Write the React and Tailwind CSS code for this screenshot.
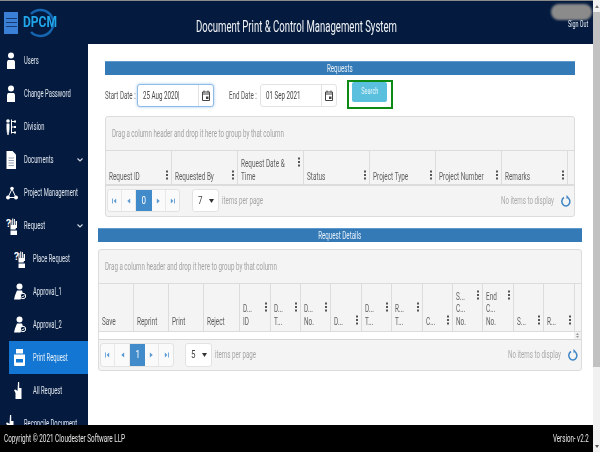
import React from "react";

const T = ({ children, className = "", s = "scale-x-[.62]", o = "origin-left" }) => (
  <span className={`inline-block whitespace-nowrap ${o} ${s} ${className}`}>{children}</span>
);

const Kebab = () => (
  <svg width="2" height="10" viewBox="0 0 2 10" className="shrink-0 mt-px fill-[#555]">
    <rect y="0.5" width="2" height="2" /><rect y="4" width="2" height="2" /><rect y="7.5" width="2" height="2" />
  </svg>
);

const Ico = ({ children, w = 14, h = 20, vb = "0 0 14 20" }) => (
  <svg width={w} height={h} viewBox={vb} className="fill-white stroke-white shrink-0" strokeWidth="0">{children}</svg>
);
const UserI = () => (
  <Ico w={8} h={18} vb="0 0 8 18"><circle cx="4" cy="3.500" r="3" /><path d="M1 8h6l1 1.500V17H0V9.500z" /></Ico>
);
const DivI = () => (
  <Ico w={10} h={18} vb="0 0 10 18"><circle cx="2" cy="3" r="1.800" /><path d="M.5 5.500h3v5l-.6 6.500H2.300L2 12l-.3 5H1.100L.5 10.500z" /><path d="M5.500 1.500v14M5.500 3.500h3M5.500 9h3M5.500 14.500h3" strokeWidth="1" fill="none" /><rect x="8" y="2.500" width="2" height="2" /><rect x="8" y="8" width="2" height="2" /><rect x="8" y="13.500" width="2" height="2" /></Ico>
);
const DocI = () => (
  <Ico w={10} h={18} vb="0 0 10 18"><path d="M.5 0H6.500L10 3.500V18H.5z" /><path d="M2.500 7h5.500M2.500 9.500h5.500M2.500 12h5.500M2.500 14.500h5.500" stroke="#9aa5b6" strokeWidth="1" fill="none" /></Ico>
);
const ProjI = () => (
  <Ico w={12} h={16} vb="0 0 12 16"><circle cx="6" cy="3.500" r="1.800" /><circle cx="2" cy="12.500" r="2" /><circle cx="10" cy="12.500" r="2" /><path d="M6 4L2 12.500h8z" fill="none" strokeWidth="1" /></Ico>
);
const ReqI = () => (
  <svg width="12" height="18" viewBox="0 0 12 18" className="shrink-0 fill-white">
    <path d="M4.500 3h1v5h.7V1.500h1V8h.7V2h1v6h.7V4h1.400v7H10l-.5 1.500h-5z" />
    <path d="M4.500 13.500h6.500V18H4.500z" />
    <text x="0" y="9.500" fontSize="10" fontWeight="700" fontFamily="Roboto, sans-serif">?</text>
  </svg>
);
const ApprI = () => (
  <Ico w={12} h={17} vb="0 0 12 17"><circle cx="5.500" cy="3.500" r="3" /><path d="M3 7.500h5l1 3-2.500 6H0l1-4z" /><circle cx="9" cy="13" r="2.700" fill="#041b3f" stroke="#fff" strokeWidth="1" /><path d="M7.700 13l1 1 1.600-1.800" fill="none" strokeWidth="1" /></Ico>
);
const PrintI = () => (
  <svg width="11" height="17" viewBox="0 0 11 17" className="shrink-0 fill-white">
    <path d="M2 0h7v4.500H2z" /><path d="M0 5.500h11V16a1 1 0 0 1-1 1H1a1 1 0 0 1-1-1z" />
    <path d="M2 10h7v3.500H2z" fill="#1376d2" />
  </svg>
);
const HandI = () => (
  <Ico w={8} h={17} vb="0 0 8 17"><path d="M4 0h1.200v6H7.500v11H1.500v-6L0 8l1.500-.5L3.500 9z" /></Ico>
);

const Item = ({ icon, label, sub, arrow, active }) => (
  <div className={`h-[33px] flex shrink-0 items-center ${sub ? "ml-[9px] pl-[5px]" : "pl-[6px]"} ${active ? "bg-[#1376d2]" : ""}`}>
    <div className={`flex shrink-0 items-center ${sub ? "w-[19px]" : "w-[18px]"}`}>{icon}</div>
    <div className="flex min-w-0 flex-1 items-center">
      <T s="scale-x-[.58]" className={`text-[10px] leading-3 ${active ? "text-[#e6f0fa]" : "text-[#dfe4ec]"}`}>{label}</T>
    </div>
    {arrow && (
      <svg width="6" height="4" viewBox="0 0 6 4" className="mr-[5px] shrink-0 fill-none stroke-[#cfd6e2]" strokeWidth="1.200"><path d="M.5.5L3 3 5.500.5" /></svg>
    )}
  </div>
);

const PIcon = ({ d }) => (
  <svg width="5" height="6" viewBox="0 0 6 6" className="fill-[#5a9ad3]"><path d={d} /></svg>
);
const icons = ["M0 0h1v6H0zM5 0v6L2 3z", "M5 0v6L1.500 3z", null, "M1 0v6l3.500-3z", "M6 0h-1v6h1zM1 0v6l3-3z"];

const Pager = ({ page, size, widths, selectW, gap, ph }) => (
  <div className="flex h-[29px] items-center">
    <div className={`flex ${ph} rounded-[3px] border border-[#e3e3e3] bg-[#fafafa] overflow-hidden`}>
      {icons.map((d, i) =>
        d ? (
          <div key={i} className="flex items-center justify-center border-r border-[#e8e8e8] last:border-r-0" style={{ width: widths[i] }}>
            <PIcon d={d} />
          </div>
        ) : (
          <div key={i} className="flex items-center justify-center bg-[#428bca] text-white" style={{ width: widths[i] }}>
            <T o="origin-center" s="scale-x-[.8]" className="text-[10px]">{page}</T>
          </div>
        )
      )}
    </div>
    <div className={`flex ${ph} items-center justify-between rounded-[3px] border border-[#e3e3e3] bg-white pl-[5px] pr-[4px]`} style={{ width: selectW, marginLeft: gap }}>
      <T s="scale-x-[.8]" className="text-[10px] text-[#444]">{size}</T>
      <svg width="5" height="4" viewBox="0 0 5 4" className="fill-[#333]"><path d="M0 0h5L2.500 4z" /></svg>
    </div>
    <div className="ml-[3px] flex min-w-0 flex-1 items-center"><T className="text-[10px] text-[#a6a6a6]">items per page</T></div>
    <div className="flex w-[60px] shrink-0 items-center"><T className="text-[10px] text-[#aaa]">No items to display</T></div>
    <svg width="10" height="12" viewBox="0 0 10 12" className="mr-[2px] shrink-0 fill-none stroke-[#3f86c6]" strokeWidth="1.500">
      <path d="M6 2.200A4 4.500 0 1 1 3 2.500" /><path d="M5.500 0v4l2-2z" className="fill-[#3f86c6]" strokeWidth="0" />
    </svg>
  </div>
);

const Head = ({ lines, kebab = true, width, pb }) => (
  <div className="flex shrink-0 items-end border-r border-[#dcdcdc] pl-[3px] pr-[3px]" style={{ width, paddingBottom: pb }}>
    <div className="flex w-full items-start justify-between">
      <div className="flex min-w-0 flex-1 flex-col">
        {lines.map((l, i) => (
          <div key={i} className="h-[12.5px] leading-[12.5px]"><T s="scale-x-[.64]" className="text-[10px] text-[#5f5f5f]">{l}</T></div>
        ))}
      </div>
      {kebab && <Kebab />}
    </div>
  </div>
);

const Bar = ({ children }) => (
  <div className="flex h-[14px] items-center justify-center border-t border-[#5f98ca] bg-[#337ab7]">
    <T o="origin-center" className="text-[10px] leading-3 text-[#e8f0f8]">{children}</T>
  </div>
);

const Group = () => (
  <div className="flex h-[34px] items-center border-b border-[#dcdcdc] pl-[6px]">
    <T className="text-[10px] text-[#a3a3a3]">Drag a column header and drop it here to group by that column</T>
  </div>
);

const Cal = () => (
  <svg width="8" height="11" viewBox="0 0 8 11" className="fill-none stroke-[#444]" strokeWidth="1">
    <path d="M.5 2h7v8.500h-7zM.5 4h7M2 .5v2M6 .5v2" /><rect x="4" y="6.500" width="2.500" height="2.500" fill="#444" strokeWidth="0" />
  </svg>
);

const DateField = ({ value, focus }) => (
  <div className={`flex h-[23px] w-[77px] rounded-[3px] border bg-white ${focus ? "border-[#8fbce6] shadow-[0_0_3px_#9ec5ea]" : "border-[#e3e3e3]"}`}>
    <div className="flex min-w-0 flex-1 items-center pl-[5px]">
      <T className="text-[10px] text-[#444]">{value}</T>
    </div>
    <div className="flex w-[15px] shrink-0 items-center justify-center border-l border-[#e3e3e3]"><Cal /></div>
  </div>
);

const cols2 = [
  [["Save"], false], [["Reprint"], false], [["Print"], false], [["Reject"], false],
  [["D...", "ID"]], [["D...", "T..."]], [["D...", "No."]], [["D..."]],
  [["D...", "T..."]], [["R...", "T..."]], [["C..."]], [["S...", "C...", "No."]],
  [["End", "C...", "No."]], [["S..."]], [["R..."]],
];
const w2 = [35, 35, 35, 35.5, 31, 30, 30, 31, 30.5, 30.5, 30, 30, 31, 30.5, 30.5];
const cols1 = [["Request ID"], ["Requested By"], ["Request Date &", "Time"], ["Status"], ["Project Type"], ["Project Number"], ["Remarks"]];

export default function App() {
  return (
    <div className="flex h-[452px] w-[600px] overflow-hidden bg-white font-['Roboto',sans-serif]">
      <div className="flex w-[593px] flex-col">
        <div className="h-px bg-[#8a8a8a]" />
        <header className="flex h-[43px] shrink-0 items-center bg-[#041b3f]">
          <div className="ml-[4px] flex h-[22px] w-[14px] shrink-0 flex-col justify-center gap-[3px] bg-[#3a80d6] px-[1.500px]">
            <div className="h-px bg-[#173a73]" /><div className="h-px bg-[#173a73]" /><div className="h-px bg-[#173a73]" />
          </div>
          <div className="relative ml-[5px] flex h-[30px] w-[30px] shrink-0 items-center">
            <svg width="30" height="30" viewBox="0 0 30 30" className="absolute left-[1px] top-0 fill-none stroke-[#1565b0]" strokeWidth="2.500">
              <path d="M7 6a13 13 0 1 1 0 18" />
            </svg>
            <T s="scale-x-[.86]" className="relative text-[14px] font-bold text-[#22a6ea]">DPCM</T>
          </div>
          <div className="ml-[143px] mt-[8px] flex min-w-0 flex-1 items-center">
            <T s="scale-x-[.563]" className="text-[17px] text-[#f2f4f7]">Document Print &amp; Control Management System</T>
          </div>
          <div className="mr-px flex w-[41px] shrink-0 flex-col items-end self-start pt-[3px]">
            <div className="h-[16px] w-[41px] rounded-full bg-[#8b8b8b] blur-[1px]" />
            <div className="mr-[3px] flex h-[9px] w-[21px] items-center"><T s="scale-x-[.6]" className="text-[9px] leading-[9px] text-[#e8ebf0]">Sign Out</T></div>
          </div>
        </header>
        <div className="flex min-h-0 flex-1">
          <aside className="flex w-[88px] shrink-0 flex-col overflow-hidden bg-[#041b3f]">
            <Item icon={<span className="ml-px flex"><UserI /></span>} label="Users" />
            <Item icon={<span className="ml-px flex"><UserI /></span>} label="Change Password" />
            <Item icon={<DivI />} label="Division" />
            <Item icon={<DocI />} label="Documents" arrow />
            <Item icon={<ProjI />} label="Project Management" />
            <Item icon={<ReqI />} label="Request" arrow />
            <Item icon={<ReqI />} label="Place Request" sub />
            <Item icon={<ApprI />} label="Approval_1" sub />
            <Item icon={<ApprI />} label="Approval_2" sub />
            <Item icon={<PrintI />} label="Print Request" sub active />
            <Item icon={<HandI />} label="All Request" sub />
            <Item icon={<HandI />} label="Reconcile Document" />
          </aside>
          <main className="min-w-0 flex-1 bg-white">
            <section className="pl-[17px] pr-[18px] pt-[17px]">
              <Bar>Requests</Bar>
              <div className="mt-[5px] flex h-[36px] items-start">
                <div className="mt-[4px] flex h-[23px] w-[32px] shrink-0 items-center"><T className="text-[10px] text-[#555]">Start Date :</T></div>
                <div className="mt-[4px]"><DateField value="25 Aug 2020|" focus /></div>
                <div className="ml-[15px] mt-[4px] flex h-[23px] w-[31px] shrink-0 items-center"><T className="text-[10px] text-[#555]">End Date :</T></div>
                <div className="mt-[4px]"><DateField value="01 Sep 2021" /></div>
                <div className="ml-[10px] h-[29px] w-[46px] border-2 border-[#0c8a14] pl-[3px]">
                  <div className="flex h-[20px] w-[35px] items-center justify-center rounded-[2px] bg-[#5bc0de]">
                    <T o="origin-center" className="text-[9px] text-[#e8f6fb]">Search</T>
                  </div>
                </div>
              </div>
              <div className="h-[101px] rounded-[3px] border border-[#dcdcdc] bg-[#f4f4f4]">
                <Group />
                <div className="flex h-[35px] border-b-2 border-[#dcdcdc]">
                  {cols1.map((l, i) => <Head key={i} lines={l} width={66} pb={3} />)}
                </div>
                <div className="px-px">
                  <Pager page="0" size="7" widths={[14, 14, 16, 14, 13]} selectW={27} gap={12} ph="h-[23px]" />
                </div>
              </div>
            </section>
            <section className="pl-[10px] pr-[11px] pt-[11px]">
              <Bar>Request Details</Bar>
              <div className="mt-[7px] h-[122px] rounded-[3px] border border-[#dcdcdc] bg-[#f4f4f4]">
                <Group />
                <div className="flex h-[48px] border-b border-[#dcdcdc]">
                  {cols2.map(([l, k], i) => <Head key={i} lines={l} kebab={k !== false} width={w2[i]} pb={5} />)}
                </div>
                <div className="flex h-[8px] justify-end border-b border-[#d5d5d5] bg-white">
                  <div className="flex w-[7px] items-center justify-center bg-[#f1f1f1]">
                    <svg width="3" height="5" viewBox="0 0 3 5" className="fill-[#999]"><path d="M1.500 0L3 2H0zM1.500 5L0 3h3z" /></svg>
                  </div>
                </div>
                <div className="px-px">
                  <Pager page="1" size="5" widths={[14, 15, 15, 14, 14]} selectW={27} gap={11} ph="h-[24px]" />
                </div>
              </div>
            </section>
          </main>
        </div>
        <footer className="flex h-[27px] shrink-0 items-center justify-between bg-black pl-[4px] pr-[4px]">
          <div className="flex min-w-0 flex-1 items-center"><T s="scale-x-[.635]" className="text-[10px] text-[#e6e6e6]">Copyright © 2021 Cloudester Software LLP</T></div>
          <div className="flex w-[36px] shrink-0 items-center"><T className="text-[10px] text-[#e6e6e6]">Version- v2.2</T></div>
        </footer>
      </div>
      <div className="flex w-[7px] flex-col bg-[#f1f1f1] pt-px">
        <div className="flex h-[11px] items-center justify-center">
          <svg width="4" height="3" viewBox="0 0 4 3" className="fill-[#777]"><path d="M2 0l2 3H0z" /></svg>
        </div>
        <div className="h-[355px] bg-[#c1c1c1]" />
        <div className="flex-1" />
        <div className="flex h-[11px] items-center justify-center">
          <svg width="4" height="3" viewBox="0 0 4 3" className="fill-[#555]"><path d="M0 0h4L2 3z" /></svg>
        </div>
      </div>
    </div>
  );
}
